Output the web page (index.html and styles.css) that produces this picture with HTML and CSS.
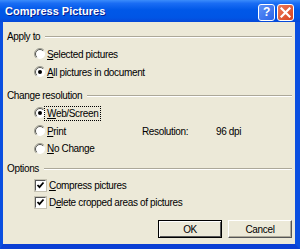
FILE: index.html
```html
<!DOCTYPE html>
<html>
<head>
    <title>Compress Pictures</title>
    <link rel="stylesheet" href="styles.css">
</head>
<body>
    <div class="window">
        <div class="titlebar">
            <span class="title">Compress Pictures</span>
            <div class="title-buttons">
                <div class="tbtn help">?</div>
                <div class="tbtn close">
                    <svg width="11" height="11" viewBox="0 0 11 11"><path d="M1.5 1.5 L9.5 9.5 M9.5 1.5 L1.5 9.5" stroke="#fff" stroke-width="2.2" stroke-linecap="square"/></svg>
                </div>
            </div>
        </div>
        <div class="client">
            <div class="group-head"><span>Apply to</span><div class="etch"></div></div>
            <div class="row">
                <svg class="radio" width="12" height="12" viewBox="0 0 12 12"><circle cx="6" cy="6" r="5" fill="#fff"/><path d="M2.1 9.9 A5.5 5.5 0 0 1 9.9 2.1" stroke="#9d9d92" fill="none"/><path d="M2.8 9.2 A4.5 4.5 0 0 1 9.2 2.8" stroke="#55554f" fill="none"/></svg>
                <span><u>S</u>elected pictures</span>
            </div>
            <div class="row">
                <svg class="radio" width="12" height="12" viewBox="0 0 12 12"><circle cx="6" cy="6" r="5" fill="#fff"/><path d="M2.1 9.9 A5.5 5.5 0 0 1 9.9 2.1" stroke="#9d9d92" fill="none"/><path d="M2.8 9.2 A4.5 4.5 0 0 1 9.2 2.8" stroke="#55554f" fill="none"/><circle cx="6" cy="6" r="2" fill="#000"/></svg>
                <span><u>A</u>ll pictures in document</span>
            </div>

            <div class="group-head second"><span>Change resolution</span><div class="etch"></div></div>
            <div class="row">
                <svg class="radio" width="12" height="12" viewBox="0 0 12 12"><circle cx="6" cy="6" r="5" fill="#fff"/><path d="M2.1 9.9 A5.5 5.5 0 0 1 9.9 2.1" stroke="#9d9d92" fill="none"/><path d="M2.8 9.2 A4.5 4.5 0 0 1 9.2 2.8" stroke="#55554f" fill="none"/><circle cx="6" cy="6" r="2" fill="#000"/></svg>
                <span class="focus"><u>W</u>eb/Screen</span>
            </div>
            <div class="row">
                <div class="res-choice">
                    <svg class="radio" width="12" height="12" viewBox="0 0 12 12"><circle cx="6" cy="6" r="5" fill="#fff"/><path d="M2.1 9.9 A5.5 5.5 0 0 1 9.9 2.1" stroke="#9d9d92" fill="none"/><path d="M2.8 9.2 A4.5 4.5 0 0 1 9.2 2.8" stroke="#55554f" fill="none"/></svg>
                    <span><u>P</u>rint</span>
                </div>
                <span class="res-label">Resolution:</span>
                <span>96 dpi</span>
            </div>
            <div class="row short">
                <svg class="radio" width="12" height="12" viewBox="0 0 12 12"><circle cx="6" cy="6" r="5" fill="#fff"/><path d="M2.1 9.9 A5.5 5.5 0 0 1 9.9 2.1" stroke="#9d9d92" fill="none"/><path d="M2.8 9.2 A4.5 4.5 0 0 1 9.2 2.8" stroke="#55554f" fill="none"/></svg>
                <span><u>N</u>o Change</span>
            </div>

            <div class="group-head third"><span>Options</span><div class="etch"></div></div>
            <div class="row short">
                <div class="check"><svg width="9" height="9" viewBox="0 0 9 9"><path d="M1.5 4 L3.5 6.2 L7.5 1.5" stroke="#000" stroke-width="1.8" fill="none"/></svg></div>
                <span><u>C</u>ompress pictures</span>
            </div>
            <div class="row short">
                <div class="check"><svg width="9" height="9" viewBox="0 0 9 9"><path d="M1.5 4 L3.5 6.2 L7.5 1.5" stroke="#000" stroke-width="1.8" fill="none"/></svg></div>
                <span>D<u>e</u>lete cropped areas of pictures</span>
            </div>

            <div class="buttons">
                <div class="btn default">OK</div>
                <div class="btn">Cancel</div>
            </div>
        </div>
    </div>
</body>
</html>
```

FILE: styles.css
```css
body {
    margin: 0;
    font-family: "Liberation Sans", Arial, sans-serif;
    font-size: 10px;
    letter-spacing: -0.35px;
    color: #000;
}

.window {
    width: 300px;
    height: 249px;
    box-sizing: border-box;
    display: flex;
    flex-direction: column;
    background: #0752e0;
    border-left: 3px solid #0a4fe0;
    border-right: 5px solid #0a4fe0;
    border-bottom: 5px solid #0a3fd4;
}

.titlebar {
    height: 22px;
    margin-left: -3px;
    margin-right: -5px;
    padding: 0 6px 0 5px;
    display: flex;
    align-items: center;
    justify-content: space-between;
    background: linear-gradient(to bottom, #3b8cfb 0%, #1a6df4 15%, #0058e8 45%, #0055e5 80%, #0648d8 100%);
}

.title {
    color: #fff;
    font-weight: bold;
    font-size: 11px;
    letter-spacing: 0;
    text-shadow: 1px 1px 0 #0a1e8c;
}

.title-buttons {
    display: flex;
    gap: 2px;
    margin-top: 2px;
}

.tbtn {
    width: 15px;
    height: 15px;
    border: 1px solid #fff;
    border-radius: 3px;
    display: flex;
    align-items: center;
    justify-content: center;
    color: #fff;
    font-weight: bold;
    font-size: 12px;
}

.help {
    background: linear-gradient(to bottom right, #5e92f8, #2a63e8);
}

.close {
    background: linear-gradient(to bottom right, #ec7a5a, #d8421e);
}

.client {
    flex: 1;
    background: #ece9d8;
    padding: 5px 3px 0 0;
    display: flex;
    flex-direction: column;
}

.group-head {
    height: 18px;
    display: flex;
    align-items: center;
    padding-left: 4px;
}

.group-head.second {
    margin-top: 5px;
}

.group-head.third {
    margin-top: 2px;
}

.etch {
    flex: 1;
    margin-left: 5px;
    border-top: 1px solid #aca899;
    border-bottom: 1px solid #fff;
    margin-top: 2px;
}

.row {
    height: 18px;
    display: flex;
    align-items: center;
    padding-left: 31px;
}

.row.short {
    height: 17px;
}

.radio {
    margin-right: 1px;
    flex-shrink: 0;
}

.focus {
    outline: 1px dotted #000;
    outline-offset: 1px;
    padding: 0 1px;
    margin-left: -1px;
}

.res-choice {
    width: 108px;
    display: flex;
    align-items: center;
}

.res-label {
    width: 74px;
}

.check {
    width: 9px;
    height: 9px;
    margin: 0 3px 0 1px;
    background: #fff;
    border-top: 1px solid #555;
    border-left: 1px solid #555;
    border-right: 1px solid #fff;
    border-bottom: 1px solid #fff;
    box-shadow: 0 0 0 1px #c5c2b2;
    display: flex;
    align-items: center;
    justify-content: center;
}

.buttons {
    margin-top: 9px;
    display: flex;
    justify-content: flex-end;
    gap: 6px;
}

.btn {
    width: 64px;
    height: 18px;
    box-sizing: border-box;
    display: flex;
    align-items: center;
    justify-content: center;
    background: #ece9d8;
    border-top: 1px solid #fff;
    border-left: 1px solid #fff;
    border-right: 1px solid #555;
    border-bottom: 1px solid #555;
    box-shadow: inset -1px -1px 0 #aca899;
}

.btn.default {
    border: 1px solid #000;
    box-shadow: inset 1px 1px 0 #fff, inset -1px -1px 0 #555;
}
```
